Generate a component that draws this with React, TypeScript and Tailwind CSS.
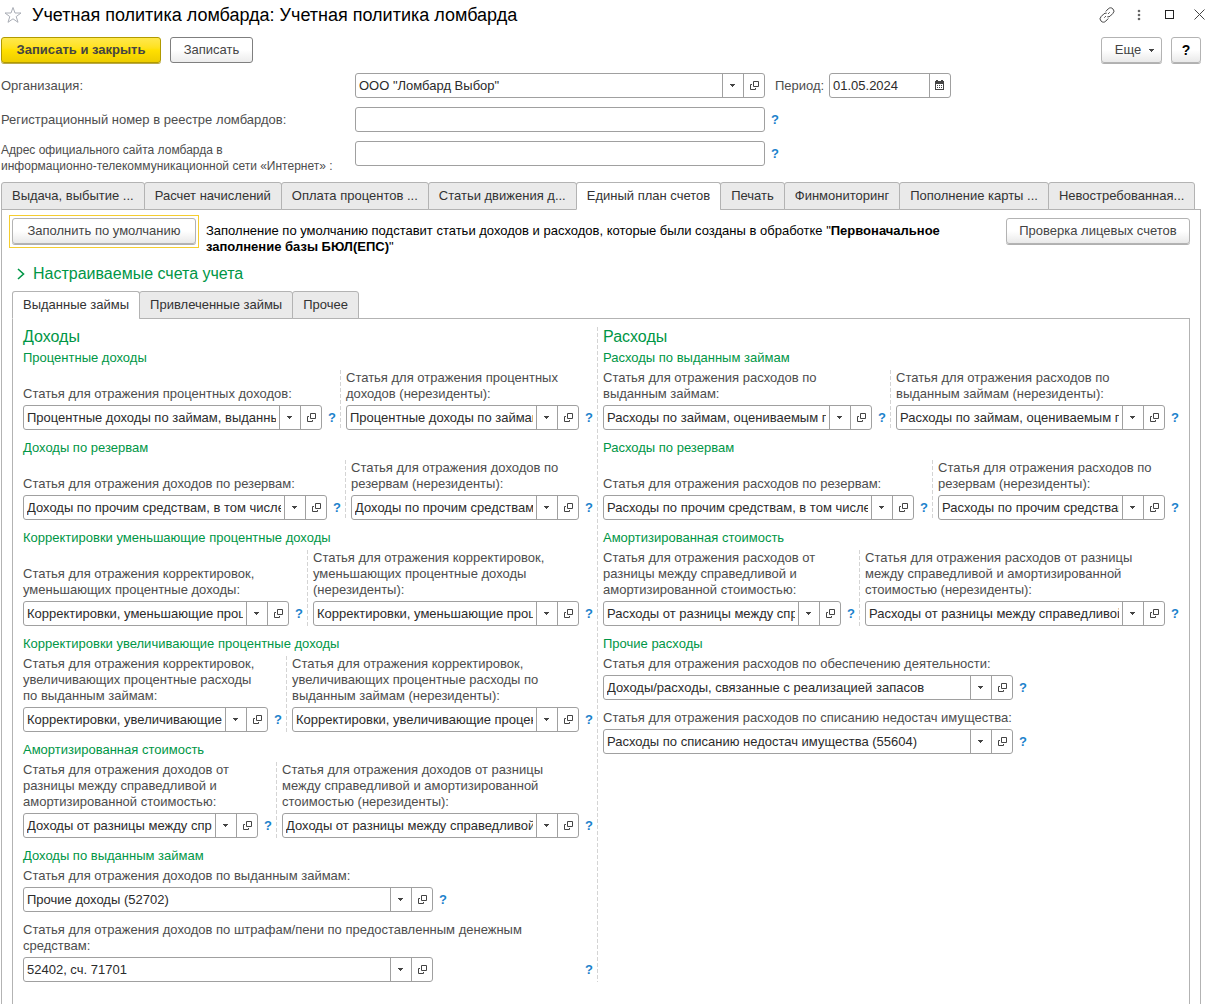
import { useId, useState, type ReactNode } from 'react';
import clsx from 'clsx';

interface FieldData {
  label: string;
  value: string;
}

interface PairData {
  title: string;
  cols: string;
  first: FieldData;
  second: FieldData;
}

const TABS = [
  'Выдача, выбытие ...',
  'Расчет начислений',
  'Оплата процентов ...',
  'Статьи движения д...',
  'Единый план счетов',
  'Печать',
  'Финмониторинг',
  'Пополнение карты ...',
  'Невостребованная...',
];

const LOAN_TABS = ['Выданные займы', 'Привлеченные займы', 'Прочее'];

const INCOME: PairData[] = [
  {
    title: 'Процентные доходы',
    cols: 'grid-cols-[317fr_257fr]',
    first: { label: 'Статья для отражения процентных доходов:', value: 'Процентные доходы по займам, выданным физическим лицам' },
    second: { label: 'Статья для отражения процентных\nдоходов (нерезиденты):', value: 'Процентные доходы по займам, выданным нерезидентам' },
  },
  {
    title: 'Доходы по резервам',
    cols: 'grid-cols-[322fr_252fr]',
    first: { label: 'Статья для отражения доходов по резервам:', value: 'Доходы по прочим средствам, в том числе по займам' },
    second: { label: 'Статья для отражения доходов по\nрезервам (нерезиденты):', value: 'Доходы по прочим средствам, в том числе по займам' },
  },
  {
    title: 'Корректировки уменьшающие процентные доходы',
    cols: 'grid-cols-[284fr_290fr]',
    first: { label: 'Статья для отражения корректировок,\nуменьшающих процентные доходы:', value: 'Корректировки, уменьшающие процентные доходы' },
    second: { label: 'Статья для отражения корректировок,\nуменьшающих процентные доходы\n(нерезиденты):', value: 'Корректировки, уменьшающие процентные доходы' },
  },
  {
    title: 'Корректировки увеличивающие процентные доходы',
    cols: 'grid-cols-[263fr_311fr]',
    first: { label: 'Статья для отражения корректировок,\nувеличивающих процентные расходы\nпо выданным займам:', value: 'Корректировки, увеличивающие процентные доходы' },
    second: { label: 'Статья для отражения корректировок,\nувеличивающих процентные расходы по\nвыданным займам (нерезиденты):', value: 'Корректировки, увеличивающие процентные доходы' },
  },
  {
    title: 'Амортизированная стоимость',
    cols: 'grid-cols-[253fr_321fr]',
    first: { label: 'Статья для отражения доходов от\nразницы между справедливой и\nамортизированной стоимостью:', value: 'Доходы от разницы между справедливой стоимостью' },
    second: { label: 'Статья для отражения доходов от разницы\nмежду справедливой и амортизированной\nстоимостью (нерезиденты):', value: 'Доходы от разницы между справедливой стоимостью' },
  },
];

const EXPENSES: PairData[] = [
  {
    title: 'Расходы по выданным займам',
    cols: 'grid-cols-[287fr_293fr]',
    first: { label: 'Статья для отражения расходов по\nвыданным займам:', value: 'Расходы по займам, оцениваемым по амортизированной' },
    second: { label: 'Статья для отражения расходов по\nвыданным займам (нерезиденты):', value: 'Расходы по займам, оцениваемым по амортизированной' },
  },
  {
    title: 'Расходы по резервам',
    cols: 'grid-cols-[329fr_251fr]',
    first: { label: 'Статья для отражения расходов по резервам:', value: 'Расходы по прочим средствам, в том числе по займам' },
    second: { label: 'Статья для отражения расходов по\nрезервам (нерезиденты):', value: 'Расходы по прочим средствам, в том числе' },
  },
  {
    title: 'Амортизированная стоимость',
    cols: 'grid-cols-[256fr_324fr]',
    first: { label: 'Статья для отражения расходов от\nразницы между справедливой и\nамортизированной стоимостью:', value: 'Расходы от разницы между справедливой' },
    second: { label: 'Статья для отражения расходов от разницы\nмежду справедливой и амортизированной\nстоимостью (нерезиденты):', value: 'Расходы от разницы между справедливой стоимостью' },
  },
];

function CaretIcon() {
  return (
    <svg width="5" height="3" viewBox="0 0 5 3" fill="currentColor">
      <path d="M0 0h5v1H4v1H3v1H2V2H1V1H0z" />
    </svg>
  );
}

function OpenIcon() {
  return (
    <svg width="10" height="9" viewBox="0 0 10 9" fill="none" stroke="currentColor">
      <path d="M4.5 0.5h5v5h-5z" />
      <path d="M3 3.5H1.5v5h5V7" />
    </svg>
  );
}

function CalendarIcon() {
  return (
    <svg width="9" height="10" viewBox="0 0 9 10">
      <path fill="currentColor" d="M1 0h2v1h3V0h2v1h1v9H0V1h1z" />
      <path fill="#fff" d="M1 4h7v5H1z" />
      <path fill="currentColor" d="M2 5h1v1H2zM4 5h1v1H4zM6 5h1v1H6zM2 7h1v1H2zM4 7h1v1H4zM6 7h1v1H6z" />
    </svg>
  );
}

function Button({ children, tone = 'default', className, label }: { children: ReactNode; tone?: 'default' | 'primary' | 'soft'; className?: string; label?: string }) {
  return (
    <button
      type="button"
      aria-label={label}
      className={clsx(
        'flex h-[26px] shrink-0 items-center justify-center whitespace-nowrap rounded-[3px] border',
        tone === 'primary' && 'border-[#b19a00] bg-linear-to-b from-[#ffe84a] via-[#ffe000] to-[#edcd00] font-bold shadow-[0_1px_0_#b9a94a]',
        tone === 'default' && 'border-[#7f7f7f] bg-linear-to-b from-white from-50% to-[#ececec]',
        tone === 'soft' && 'border-[#b3b3b3] bg-linear-to-b from-white from-50% to-[#e9e9e9] shadow-[0_1px_0_#b0b0b0]',
        className,
      )}
    >
      {children}
    </button>
  );
}

function Help() {
  return (
    <button type="button" aria-label="Справка" className="h-[25px] w-[18px] shrink-0 pl-[2px] text-center font-bold text-[#1c82cc]">
      ?
    </button>
  );
}

function Box({ id, value = '', picker, date }: { id: string; value?: string; picker?: boolean; date?: boolean }) {
  const btn = 'flex w-[21px] shrink-0 items-center justify-center border-l border-[#a0a0a0] pr-px pb-px';
  return (
    <div className="flex h-[25px] min-w-0 flex-1 rounded-[3px] border border-[#a0a0a0] bg-white text-[#444]">
      <input id={id} type="text" defaultValue={value} className="mx-[3px] min-w-0 flex-1 text-[#2b2b2b] outline-none" />
      {picker && <button type="button" aria-label="Выбрать" className={btn}><CaretIcon /></button>}
      {picker && <button type="button" aria-label="Открыть" className={btn}><OpenIcon /></button>}
      {date && <button type="button" aria-label="Календарь" className={btn}><CalendarIcon /></button>}
    </div>
  );
}

function Field({ label, value, help = true }: FieldData & { help?: boolean }) {
  const id = useId();
  return (
    <div className="flex min-w-0 flex-1 flex-col justify-end gap-[3px]">
      <label htmlFor={id} className="whitespace-pre">{label}</label>
      <div className="flex">
        <Box id={id} value={value} picker />
        {help && <Help />}
      </div>
    </div>
  );
}

function Divider() {
  return <div className="mr-[5px] w-px shrink-0 bg-[repeating-linear-gradient(to_bottom,#d4d4d4_0_4px,transparent_4px_6px)]" />;
}

function ColumnTitle({ children }: { children: ReactNode }) {
  return <h2 className="-mb-[7px] text-[16px] leading-5 text-[#009646]">{children}</h2>;
}

function GroupTitle({ children }: { children: ReactNode }) {
  return <h3 className="text-[#009646]">{children}</h3>;
}

function Pair({ title, cols, first, second }: PairData) {
  return (
    <section className="flex flex-col gap-1">
      <GroupTitle>{title}</GroupTitle>
      <div className={clsx('grid', cols)}>
        <Field {...first} />
        <div className="flex min-w-0">
          <Divider />
          <Field {...second} />
        </div>
      </div>
    </section>
  );
}

function Tabs({ items, active, onSelect }: { items: string[]; active: number; onSelect: (i: number) => void }) {
  return (
    <div role="tablist" className="relative -mb-px flex">
      {items.map((t, i) => (
        <button
          key={t}
          type="button"
          role="tab"
          aria-selected={i === active}
          onClick={() => onSelect(i)}
          className={clsx(
            '-mr-px h-7 whitespace-nowrap rounded-t-[3px] border border-[#b3b3b3] px-[10px] text-[#333]',
            i === active ? 'border-b-white bg-white' : 'bg-[#eaeaea]',
          )}
        >
          {t}
        </button>
      ))}
    </div>
  );
}

export default function App() {
  const [tab, setTab] = useState(4);
  const [loanTab, setLoanTab] = useState(0);

  return (
    <div className="flex h-screen flex-col overflow-hidden bg-white font-['Liberation_Sans',Arial,sans-serif] text-[13px] leading-4 text-[#4d4d4d]">
      <header className="flex h-[29px] items-center px-1">
        <button type="button" aria-label="В избранное" className="text-[#a9adb5]">
          <svg width="18" height="18" viewBox="0 0 18 18" fill="none" stroke="currentColor">
            <path d="M9 1.5L11 7h6l-4.8 3.6 1.8 5.7L9 12.8l-5 3.5 1.8-5.7L1 7h6z" />
          </svg>
        </button>
        <h1 className="ml-[10px] flex-1 whitespace-nowrap text-[18px] leading-6 text-black">Учетная политика ломбарда: Учетная политика ломбарда</h1>
        <div className="flex items-center text-[#444]">
          <button type="button" aria-label="Ссылка">
            <svg width="16" height="16" viewBox="0 0 16 16" fill="none" stroke="currentColor" strokeLinecap="round">
              <path d="M7 4.2l2.2-2.3a3.1 3.1 0 0 1 4.7 0a3.1 3.1 0 0 1 0 4.5l-2.6 2.6a3.2 3.2 0 0 1-2.6.9" />
              <path d="M9 11.8l-2.2 2.3a3.1 3.1 0 0 1-4.7 0a3.1 3.1 0 0 1 0-4.5l2.6-2.6a3.2 3.2 0 0 1 2.6-.9" />
              <path d="M5.6 10.4l1-1M9.4 6.6l1-1" />
            </svg>
          </button>
          <button type="button" aria-label="Меню" className="ml-[22px]">
            <svg width="4" height="12" viewBox="0 0 4 12" fill="#666">
              <circle cx="2" cy="2" r="1.3" />
              <circle cx="2" cy="6" r="1.3" />
              <circle cx="2" cy="10" r="1.3" />
            </svg>
          </button>
          <button type="button" aria-label="Развернуть" className="ml-6 size-[9px] border border-[#222]" />
          <button type="button" aria-label="Закрыть" className="ml-5">
            <svg width="11" height="11" viewBox="0 0 11 11" fill="none" stroke="currentColor">
              <path d="M0.5 0.5l10 10M10.5 0.5l-10 10" />
            </svg>
          </button>
        </div>
      </header>

      <div className="mt-2 flex items-center pl-px pr-2 text-[#444]">
        <Button tone="primary" className="w-[160px]">Записать и закрыть</Button>
        <Button className="ml-[9px] w-[83px]">Записать</Button>
        <Button tone="soft" className="ml-auto w-[61px] gap-2 pl-[6px]">Еще <CaretIcon /></Button>
        <Button tone="soft" className="ml-[9px] w-[30px] text-[14px] font-bold text-black" label="Помощь">?</Button>
      </div>

      <div className="mt-[10px] flex flex-col gap-[9px] pl-px">
        <div className="flex items-center">
          <label htmlFor="org" className="w-[354px]">Организация:</label>
          <div className="flex w-[410px]"><Box id="org" value={'ООО "Ломбард Выбор"'} picker /></div>
          <label htmlFor="period" className="ml-[10px] w-[54px]">Период:</label>
          <div className="flex w-[122px]"><Box id="period" value="01.05.2024" date /></div>
        </div>
        <div className="flex items-center">
          <label htmlFor="regnum" className="w-[354px]">Регистрационный номер в реестре ломбардов:</label>
          <div className="flex w-[410px]"><Box id="regnum" /></div>
          <Help />
        </div>
        <div className="flex h-[25px] items-center">
          <label htmlFor="site" className="w-[354px] whitespace-nowrap pt-2 text-[12px] leading-4">
            Адрес официального сайта ломбарда в<br />информационно-телекоммуникационной сети «Интернет» :
          </label>
          <div className="flex w-[410px]"><Box id="site" /></div>
          <Help />
        </div>
      </div>

      <div className="mt-4 flex min-h-0 flex-1 flex-col pl-px pr-2">
        <Tabs items={TABS} active={tab} onSelect={setTab} />
        <div className="flex min-h-0 flex-1 flex-col border-x border-t border-[#b3b3b3] px-[10px] pt-2">
          <div className="flex items-start text-[#444]">
            <div className="-m-[3px] mr-0 border border-[#f5cd2f] p-[2px] pb-[3px]">
              <Button tone="soft" className="w-[184px]">Заполнить по умолчанию</Button>
            </div>
            <p className="ml-[7px] w-[770px] pt-[5px] text-black">
              Заполнение по умолчанию подставит статьи доходов и расходов, которые были созданы в обработке "<b>Первоначальное<br />заполнение базы БЮЛ(ЕПС)</b>"
            </p>
            <Button tone="soft" className="ml-auto w-[184px]">Проверка лицевых счетов</Button>
          </div>

          <button type="button" className="mt-[9px] flex items-center gap-2 self-start pl-[5px] text-[16px] leading-5 text-[#009646]">
            <svg width="8" height="12" viewBox="0 0 8 12" fill="none" stroke="currentColor" strokeWidth="1.6">
              <path d="M1 1l5.5 5L1 11" />
            </svg>
            Настраиваемые счета учета
          </button>

          <div className="mt-[7px] flex min-h-0 flex-1 flex-col">
            <Tabs items={LOAN_TABS} active={loanTab} onSelect={setLoanTab} />
            <div className="grid min-h-0 flex-1 grid-cols-[574fr_586fr] content-start border-x border-t border-[#b3b3b3] pl-[10px] pr-[6px] pt-2">
              <div className="flex min-w-0 flex-col gap-[10px]">
                <ColumnTitle>Доходы</ColumnTitle>
                {INCOME.map((p) => <Pair key={p.title} {...p} />)}
                <section className="flex flex-col gap-1">
                  <GroupTitle>Доходы по выданным займам</GroupTitle>
                  <div className="flex w-[428px]">
                    <Field label="Статья для отражения доходов по выданным займам:" value="Прочие доходы (52702)" />
                  </div>
                </section>
                <div className="flex items-end justify-between">
                  <div className="flex w-[410px]">
                    <Field label={'Статья для отражения доходов по штрафам/пени по предоставленным денежным\nсредствам:'} value="52402, сч. 71701" help={false} />
                  </div>
                  <Help />
                </div>
              </div>

              <div className="flex min-w-0">
                <Divider />
                <div className="flex min-w-0 flex-1 flex-col gap-[10px]">
                  <ColumnTitle>Расходы</ColumnTitle>
                  {EXPENSES.map((p) => <Pair key={p.title} {...p} />)}
                  <section className="flex flex-col gap-1">
                    <GroupTitle>Прочие расходы</GroupTitle>
                    <div className="flex w-[428px]">
                      <Field label="Статья для отражения расходов по обеспечению деятельности:" value="Доходы/расходы, связанные с реализацией запасов" />
                    </div>
                  </section>
                  <div className="flex w-[428px]">
                    <Field label="Статья для отражения расходов по списанию недостач имущества:" value="Расходы по списанию недостач имущества (55604)" />
                  </div>
                </div>
              </div>
            </div>
          </div>
        </div>
      </div>
    </div>
  );
}
